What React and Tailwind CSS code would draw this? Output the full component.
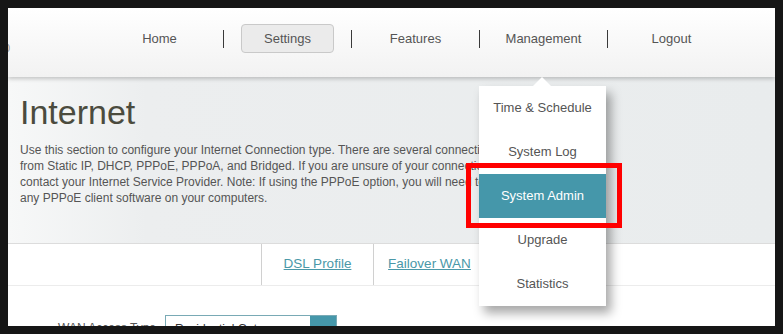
import React from "react";

const navItems = ["Home", "Settings", "Features", "Management", "Logout"];
const menuItems = ["Time & Schedule", "System Log", "System Admin", "Upgrade", "Statistics"];

function NavBar() {
  return (
    <div className="flex items-center h-[29px] ml-[88px]">
      {navItems.map((item, i) => (
        <React.Fragment key={item}>
          {i > 0 && <div className="w-px h-[18px] bg-[#3a3a3a]" />}
          <div className="w-[127px] flex justify-center items-center">
            {item === "Settings" ? (
              <div className="w-[93px] h-[29px] flex items-center justify-center rounded-[4px] border border-[#c9c9c9] bg-[#ebebeb] text-[13px] text-[#555]">
                {item}
              </div>
            ) : (
              <span className="text-[13px] text-[#555]">{item}</span>
            )}
          </div>
        </React.Fragment>
      ))}
    </div>
  );
}

function DropMenu() {
  return (
    <div className="absolute left-[471px] top-[78px] w-[127px] bg-white shadow-[5px_7px_10px_rgba(0,0,0,0.35)] z-20">
      <div className="absolute -top-[9px] left-[54px] w-0 h-0 border-l-[9px] border-r-[9px] border-b-[9px] border-l-transparent border-r-transparent border-b-white" />
      {menuItems.map((m) => (
        <div
          key={m}
          className={
            m === "System Admin"
              ? "h-[44px] flex items-center justify-center text-[13px] bg-[#4597aa] text-white"
              : "h-[44px] flex items-center justify-center text-[13px] text-[#555]"
          }
        >
          {m}
        </div>
      ))}
    </div>
  );
}

export default function App() {
  return (
    <div className="w-[783px] h-[334px] bg-[#161616] p-2 font-['Liberation_Sans',Arial,sans-serif]">
      <div className="relative w-[767px] h-[318px] overflow-hidden bg-white">
        {/* header */}
        <div className="relative z-10 h-[69px] pt-[16px] bg-gradient-to-b from-white to-[#f2f2f2] shadow-[0_2px_4px_rgba(0,0,0,0.2)]">
          <span className="absolute -left-[4px] top-[33px] text-[11px] leading-[14px] text-[#999]">0</span>
          <NavBar />
        </div>

        {/* intro */}
        <div className="h-[166px] px-3 pt-[18px] bg-[linear-gradient(to_right,#f7f8f8_0%,#eceeef_18%,#e9eced_100%)]">
          <h1 className="text-[34px] leading-[34px] text-[#4b4b3e]">Internet</h1>
          <p className="mt-[13px] text-[12px] leading-[16px] text-[#555] whitespace-nowrap">
            Use this section to configure your Internet Connection type. There are several connection types to choose
            <br />
            from Static IP, DHCP, PPPoE, PPPoA, and Bridged. If you are unsure of your connection type, please
            <br />
            contact your Internet Service Provider. Note: If using the PPPoE option, you will need to remove or disable
            <br />
            any PPPoE client software on your computers.
          </p>
        </div>

        {/* tabs */}
        <div className="flex h-[43px] border-t border-[#dcdcdc] border-b border-b-[#ececec] pl-[253px]">
          <div className="w-[112px] border-l border-[#d0d0d0] flex items-center justify-center">
            <span className="text-[13.5px] text-[#4a98a8] underline">DSL Profile</span>
          </div>
          <div className="w-[112px] border-l border-[#d0d0d0] flex items-center justify-center">
            <span className="text-[13.5px] text-[#4a98a8] underline">Failover WAN</span>
          </div>
          <div className="w-[112px] border-l border-[#d0d0d0]" />
        </div>

        {/* form */}
        <div className="flex items-start pt-[29px]">
          <span className="ml-[50px] w-[107px] pt-[5px] text-[12px] leading-[16px] text-[#555]">WAN Access Type</span>
          <div className="flex w-[172px] h-[28px] border border-[#79aab5]">
            <span className="flex-1 pl-[9px] pt-[5px] text-[12px] leading-[16px] text-[#333]">Residential Gateway</span>
            <div className="w-[26px] bg-[#4597aa]" />
          </div>
        </div>

        <DropMenu />

        {/* highlight box */}
        <div className="absolute left-[458px] top-[155px] w-[156px] h-[65px] border-[5px] border-[#ff0000] z-30" />
      </div>
    </div>
  );
}
